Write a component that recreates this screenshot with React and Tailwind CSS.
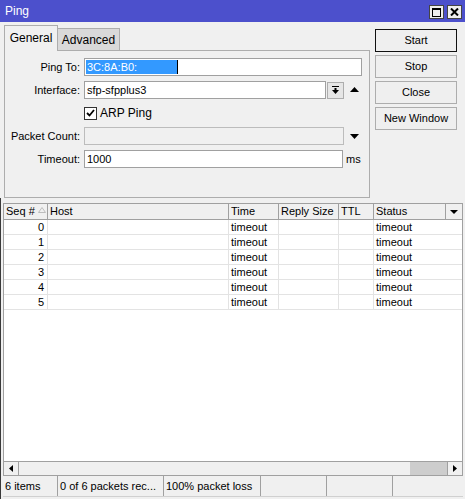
import React from "react";

const rows = [0, 1, 2, 3, 4, 5];

function TriDown({ w = 9, h = 5 }) {
  return (
    <svg width={w} height={h} viewBox={`0 0 ${w} ${h}`}>
      <path d={`M0 0H${w}L${w / 2} ${h}Z`} fill="#000" />
    </svg>
  );
}

function TriUp({ w = 9, h = 5 }) {
  return (
    <svg width={w} height={h} viewBox={`0 0 ${w} ${h}`}>
      <path d={`M0 ${h}H${w}L${w / 2} 0Z`} fill="#000" />
    </svg>
  );
}

function Field({ label, children }) {
  return (
    <div className="flex h-[18px] items-center">
      <span className="w-[75px] text-right">{label}</span>
      <div className="ml-[4px] flex h-full items-center">{children}</div>
    </div>
  );
}

function Button({ children, primary }) {
  return (
    <button
      className={
        "h-[23px] w-[82px] bg-[#efefef] text-center leading-[21px] " +
        (primary ? "border border-[#111]" : "border border-[#adadad]")
      }
    >
      {children}
    </button>
  );
}

export default function App() {
  return (
    <div className="flex h-[499px] w-[465px] flex-col overflow-hidden bg-[#f0f0f0] font-['Liberation_Sans',Arial,sans-serif] text-[11px] text-black">
      {/* title bar */}
      <div className="flex h-[22px] items-center bg-[#4c50cc] pl-[5px] pr-[3px]">
        <span className="text-[12px] text-white">Ping</span>
        <div className="ml-auto flex gap-[3px] pt-[2px]">
          <div className="flex h-[14px] w-[15px] items-center justify-center border border-[#444] bg-[#eeeeee]">
            <svg width="9" height="9" viewBox="0 0 9 9">
              <rect x="0.5" y="0.5" width="8" height="8" fill="none" stroke="#000" />
              <rect x="0" y="0" width="9" height="2" fill="#000" />
            </svg>
          </div>
          <div className="flex h-[14px] w-[15px] items-center justify-center border border-[#444] bg-[#eeeeee]">
            <svg width="9" height="8" viewBox="0 0 9 8">
              <path d="M1 0.5L8 7.5M8 0.5L1 7.5" stroke="#000" strokeWidth="2" />
            </svg>
          </div>
        </div>
      </div>

      {/* tabs, form and buttons */}
      <div className="flex h-[176px]">
        <div className="ml-[4px] flex w-[366px] flex-col">
          <div className="flex h-[28px] items-end">
            <div className="relative z-10 -mb-px flex h-[26px] w-[54px] items-center justify-center border border-b-0 border-[#adadad] bg-[#f0f0f0] pb-[1px] text-[12px]">
              General
            </div>
            <div className="flex h-[22px] w-[62px] items-center justify-center border border-l-0 border-b-0 border-[#adadad] bg-[#d9d9d9] text-[12px]">
              Advanced
            </div>
          </div>
          <div className="flex h-[148px] flex-col gap-[5px] border border-[#adadad] pt-[7px]">
            <Field label="Ping To:">
              <div className="flex h-[18px] w-[278px] items-center border border-[#a0a0a0] bg-white pl-[1px]">
                <span className="h-[14px] w-[91px] bg-[#3399ff] pl-[1px] leading-[14px] text-white">
                  3C:8A:B0:
                </span>
                <span className="h-[14px] w-px bg-black" />
              </div>
            </Field>
            <Field label="Interface:">
              <div className="flex h-[18px] w-[242px] items-center border border-[#a0a0a0] bg-white pl-[2px]">
                sfp-sfpplus3
              </div>
              <div className="ml-px flex h-[17px] w-[17px] items-center justify-center border border-[#adadad] bg-[#e6e6e6]">
                <svg width="7" height="8" viewBox="0 0 7 8">
                  <rect x="0" y="0" width="7" height="1" fill="#000" />
                  <rect x="2.5" y="2" width="2" height="2" fill="#000" />
                  <path d="M0 4H7L3.5 8Z" fill="#000" />
                </svg>
              </div>
              <div className="ml-[6px] pb-[1px]">
                <TriUp />
              </div>
            </Field>
            <Field label="">
              <div className="flex h-[13px] w-[13px] items-center justify-center border border-[#333] bg-white">
                <svg width="9" height="8" viewBox="0 0 9 8">
                  <path d="M1 4L3.5 6.5L8 1" fill="none" stroke="#000" strokeWidth="1.8" />
                </svg>
              </div>
              <span className="ml-[3px] text-[12px]">ARP Ping</span>
            </Field>
            <Field label="Packet Count:">
              <div className="h-[18px] w-[260px] border border-[#bcbcbc] bg-[#f0f0f0]" />
              <div className="ml-[6px] pt-[1px]">
                <TriDown />
              </div>
            </Field>
            <Field label="Timeout:">
              <div className="flex h-[18px] w-[259px] items-center border border-[#a0a0a0] bg-white pl-[2px]">
                1000
              </div>
              <span className="ml-[3px]">ms</span>
            </Field>
          </div>
        </div>

        <div className="ml-[5px] flex flex-col gap-[3px] pt-[7px]">
          <Button primary>Start</Button>
          <Button>Stop</Button>
          <Button>Close</Button>
          <Button>New Window</Button>
        </div>
      </div>

      {/* results list */}
      <div className="flex flex-1 flex-col border-l border-[#3a3a3a] pt-[5px]">
        <div className="ml-[2px] flex w-[460px] flex-1 flex-col border border-b-0 border-[#a0a0a0] bg-white">
          <div className="grid h-[16px] grid-cols-[44px_181px_50px_60px_35px_72px_16px] border-b border-[#a0a0a0] bg-[#f0f0f0] leading-[15px]">
            <div className="flex items-center border-r border-[#a0a0a0] pl-[2px]">
              Seq #
              <svg width="8" height="6" viewBox="0 0 8 6" className="ml-[3px] mb-[3px]">
                <path d="M0.5 5.5H7.5L4 0.5Z" fill="none" stroke="#bdbdbd" />
              </svg>
            </div>
            <div className="border-r border-[#a0a0a0] pl-[2px]">Host</div>
            <div className="border-r border-[#a0a0a0] pl-[2px]">Time</div>
            <div className="border-r border-[#a0a0a0] pl-[2px]">Reply Size</div>
            <div className="border-r border-[#a0a0a0] pl-[2px]">TTL</div>
            <div className="border-r border-[#a0a0a0] pl-[2px]">Status</div>
            <div className="flex items-center justify-center">
              <TriDown w={8} h={4} />
            </div>
          </div>
          {rows.map((n) => (
            <div
              key={n}
              className="grid h-[15px] grid-cols-[44px_181px_50px_60px_35px_88px] border-b border-[#e3e3e3] leading-[14px]"
            >
              <div className="border-r border-[#e3e3e3] pr-[3px] text-right">{n}</div>
              <div className="border-r border-[#e3e3e3]" />
              <div className="border-r border-[#e3e3e3] pl-[2px]">timeout</div>
              <div className="border-r border-[#e3e3e3]" />
              <div className="border-r border-[#e3e3e3]" />
              <div className="pl-[2px]">timeout</div>
            </div>
          ))}
        </div>

        {/* horizontal scrollbar */}
        <div className="ml-[2px] flex h-[15px] w-[460px] border border-[#a0a0a0] bg-[#f0f0f0]">
          <div className="flex w-[15px] items-center justify-center border-r border-[#a0a0a0]">
            <svg width="4" height="7" viewBox="0 0 4 7">
              <path d="M4 0V7L0 3.5Z" fill="#000" />
            </svg>
          </div>
          <div className="flex-1" />
          <div className="w-[37px] bg-[#cdcdcd]" />
          <div className="flex w-[15px] items-center justify-center border-l border-[#a0a0a0]">
            <svg width="4" height="7" viewBox="0 0 4 7">
              <path d="M0 0V7L4 3.5Z" fill="#000" />
            </svg>
          </div>
        </div>

        {/* status bar */}
        <div className="mb-[2px] ml-[2px] flex h-[21px] w-[460px] border-b border-[#d0d0d0] leading-[20px]">
          <div className="w-[55px] border-r border-[#a0a0a0] pl-[2px]">6 items</div>
          <div className="w-[106px] border-r border-[#a0a0a0] pl-[2px]">0 of 6 packets rec...</div>
          <div className="w-[97px] border-r border-[#a0a0a0] pl-[2px]">100% packet loss</div>
          <div className="w-[66px] border-r border-[#a0a0a0]" />
          <div className="w-[66px] border-r border-[#a0a0a0]" />
          <div className="flex-1" />
        </div>
      </div>
    </div>
  );
}
